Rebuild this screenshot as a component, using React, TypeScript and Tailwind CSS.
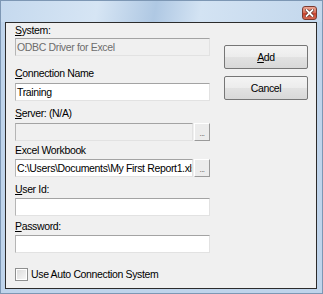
export default function App() {
  const box =
    'h-[18px] border border-t-[#a3a3a3] border-l-[#b5b5b5] border-r-[#e2e2e2] border-b-[#e2e2e2] flex items-center px-[1px] overflow-hidden whitespace-nowrap'

  const Dots = () => (
    <div className="w-[16px] h-[18px] ml-[1px] shrink-0 border border-t-white border-l-white border-r-[#9a9a9a] border-b-[#9a9a9a] bg-[#ececec] flex items-end justify-center pb-[2px]">
      <span className="text-[8px] leading-[8px] text-[#555] tracking-[-0.5px]">...</span>
    </div>
  )

  const btn =
    'w-[84px] h-[24px] rounded-[2px] border border-[#767676] bg-[linear-gradient(180deg,#f4f4f4_0%,#ececec_50%,#e2e2e2_51%,#d8d8d8_100%)] flex items-center justify-center'

  return (
    <div className="w-[323px] h-[294px] flex flex-col border border-[#7d97b4] bg-[#bfd4eb] font-['Liberation_Sans',Arial,sans-serif] text-[10.5px] tracking-[-0.35px] leading-[13px] text-black overflow-hidden">
      {/* title bar */}
      <div className="h-[21px] flex justify-end items-start bg-[linear-gradient(100deg,#c5d9ee_0%,#d6e5f4_30%,#afc8e3_48%,#d3e3f3_62%,#c3d7ec_100%)]">
        <div className="mt-[5px] mr-[5px] w-[15px] h-[14px] rounded-[3px] border border-[#7b3a30] bg-[linear-gradient(180deg,#eba796_0%,#d8735e_45%,#c7432e_55%,#d56b55_100%)] flex items-center justify-center">
          <svg width="9" height="8" viewBox="0 0 9 8">
            <path d="M1.5 1 L7.5 7 M7.5 1 L1.5 7" stroke="#5a2a24" strokeWidth="3.2" strokeLinecap="square" />
            <path d="M1.5 1 L7.5 7 M7.5 1 L1.5 7" stroke="#ffffff" strokeWidth="1.8" strokeLinecap="square" />
          </svg>
        </div>
      </div>

      {/* client area */}
      <div className="flex-1 ml-[4px] mr-[5px] mb-[4px] border border-[#2c2c2c] bg-[#f0f0f0] flex">
        <div className="w-[204px] pl-[9px] flex flex-col">
          <div className="mt-[1px] h-[13px]">
            <span className="underline">S</span>ystem:
          </div>
          <div className={`mt-[1px] ${box} bg-[#f0f0f0] text-[#6d6d6d]`}>ODBC Driver for Excel</div>

          <div className="mt-[11px] h-[13px]">
            <span className="underline">C</span>onnection Name
          </div>
          <div className={`mt-[3px] ${box} bg-white`}>Training</div>

          <div className="mt-[6px] h-[13px]">
            <span className="underline">S</span>erver: (N/A)
          </div>
          <div className="mt-[3px] flex">
            <div className={`flex-1 min-w-0 ${box} bg-[#f0f0f0]`}></div>
            <Dots />
          </div>

          <div className="mt-[3px] h-[13px]">Excel Workbook</div>
          <div className="mt-[2px] flex">
            <div className={`flex-1 min-w-0 ${box} bg-white`}>C:\Users\Documents\My First Report1.xlsx</div>
            <Dots />
          </div>

          <div className="mt-[6px] h-[13px]">
            <span className="underline">U</span>ser Id:
          </div>
          <div className={`mt-[2px] ${box} bg-white`}></div>

          <div className="mt-[4px] h-[13px]">
            <span className="underline">P</span>assword:
          </div>
          <div className={`mt-[2px] ${box} bg-white`}></div>

          <div className="mt-[15px] flex items-center">
            <div className="w-[13px] h-[13px] shrink-0 border border-[#8e8f8f] bg-white p-[1px]">
              <div className="w-full h-full bg-[linear-gradient(135deg,#dcdcdc_0%,#f6f6f6_100%)]"></div>
            </div>
            <span className="ml-[3px]">Use Auto Connection System</span>
          </div>
        </div>

        <div className="ml-[14px] mt-[22px] flex flex-col gap-[7px]">
          <div className={btn}>
            <span>
              <span className="underline">A</span>dd
            </span>
          </div>
          <div className={btn}>Cancel</div>
        </div>
      </div>
    </div>
  )
}
